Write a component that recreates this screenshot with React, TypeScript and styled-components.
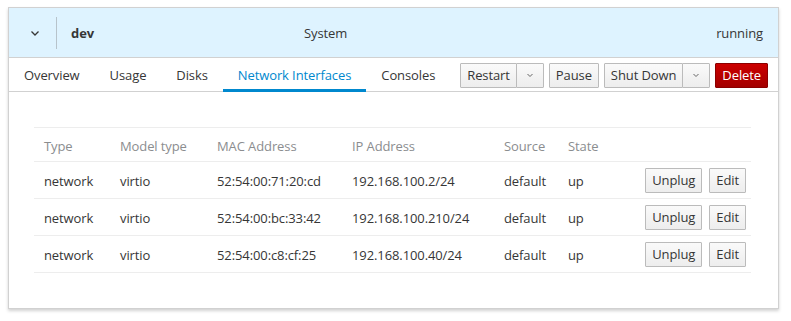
import styled, { createGlobalStyle } from 'styled-components'

const GlobalStyle = createGlobalStyle`
  body {
    margin: 0;
    padding: 7px 12px 13px 8px;
    font-family: 'Open Sans', 'Liberation Sans', sans-serif;
    font-size: 13px;
    letter-spacing: -0.1px;
    color: #363636;
    background: #fff;
    white-space: nowrap;
  }
`

const Card = styled.div`
  width: 769px;
  border: 1px solid #d1d1d1;
  background: #fff;
  box-shadow: 0 2px 3px rgba(3, 3, 3, 0.18);
`

const Header = styled.div`
  display: grid;
  grid-template-columns: 47px 1px 247px 1fr auto;
  align-items: center;
  height: 49px;
  padding-right: 15px;
  background: #def3ff;
  border-bottom: 1px solid #d1d1d1;
`

const Toggle = styled.span`
  display: flex;
  justify-content: center;
  padding-left: 4px;
`

const Separator = styled.span`
  width: 1px;
  height: 32px;
  background: #b7c3cb;
`

const VmName = styled.span`
  padding-left: 14px;
  font-weight: 700;
`

const TabsBar = styled.div`
  display: flex;
  justify-content: space-between;
  align-items: center;
  height: 33px;
  padding-right: 10px;
  border-bottom: 1px solid #d1d1d1;
`

const Tabs = styled.div`
  display: flex;
  align-self: stretch;
`

const Tab = styled.div<{ $active?: boolean }>`
  display: flex;
  align-items: center;
  padding: 3px 15px 0;
  color: ${(p) => (p.$active ? '#0088ce' : '#363636')};
  border-bottom: 3px solid ${(p) => (p.$active ? '#0088ce' : 'transparent')};
  margin-bottom: -1px;
`

const Actions = styled.div`
  display: flex;
  gap: 5px;
  padding-top: 1px;
`

const Group = styled.div`
  display: flex;
`

const Button = styled.button<{ $danger?: boolean; $caret?: boolean }>`
  height: 25px;
  padding: ${(p) => (p.$caret ? '0 9px' : '0 6px')};
  font: inherit;
  letter-spacing: inherit;
  color: ${(p) => (p.$danger ? '#fff' : '#363636')};
  background: ${(p) =>
    p.$danger
      ? 'linear-gradient(#cc0000, #a30000)'
      : 'linear-gradient(#fafafa, #ededed)'};
  border: 1px solid ${(p) => (p.$danger ? '#8b0000' : '#bbb')};
  border-radius: 1px;
  display: flex;
  align-items: center;
  & + & {
    margin-left: -1px;
  }
`

const Body = styled.div`
  padding: 35px 27px 35px 25px;
`

const Table = styled.table`
  width: 100%;
  border-collapse: collapse;
`

const HeadCell = styled.th`
  height: 31px;
  padding: 2px 10px 0;
  font-weight: 400;
  text-align: left;
  color: #8b8d8f;
  border-top: 1px solid #ededed;
  border-bottom: 1px solid #ededed;
`

const Cell = styled.td`
  height: 35px;
  padding: 1px 10px 0;
  border-bottom: 1px solid #ededed;
`

const ButtonCell = styled.td`
  padding: 0 5px 0 0;
  border-bottom: 1px solid #ededed;
`

const RowButtons = styled.div`
  display: flex;
  justify-content: flex-end;
  gap: 8px;
`

const Chevron = ({ size = 10 }: { size?: number }) => (
  <svg width={size} height={size} viewBox="0 0 10 10">
    <path d="M1.5 3.5 L5 7 L8.5 3.5" fill="none" stroke="#363636" strokeWidth="1.3" />
  </svg>
)

const SmallCaret = () => (
  <svg width="8" height="8" viewBox="0 0 8 8">
    <path d="M1.5 3 L4 5.5 L6.5 3" fill="none" stroke="#666" strokeWidth="1" />
  </svg>
)

const interfaces = [
  { mac: '52:54:00:71:20:cd', ip: '192.168.100.2/24' },
  { mac: '52:54:00:bc:33:42', ip: '192.168.100.210/24' },
  { mac: '52:54:00:c8:cf:25', ip: '192.168.100.40/24' },
]

export default function App() {
  return (
    <>
      <GlobalStyle />
      <Card>
        <Header>
          <Toggle>
            <Chevron />
          </Toggle>
          <Separator />
          <VmName>dev</VmName>
          <span>System</span>
          <span>running</span>
        </Header>
        <TabsBar>
          <Tabs>
            <Tab>Overview</Tab>
            <Tab>Usage</Tab>
            <Tab>Disks</Tab>
            <Tab $active>Network Interfaces</Tab>
            <Tab>Consoles</Tab>
          </Tabs>
          <Actions>
            <Group>
              <Button>Restart</Button>
              <Button $caret>
                <SmallCaret />
              </Button>
            </Group>
            <Button>Pause</Button>
            <Group>
              <Button>Shut Down</Button>
              <Button $caret>
                <SmallCaret />
              </Button>
            </Group>
            <Button $danger>Delete</Button>
          </Actions>
        </TabsBar>
        <Body>
          <Table>
            <thead>
              <tr>
                <HeadCell style={{ width: 56 }}>Type</HeadCell>
                <HeadCell style={{ width: 77 }}>Model type</HeadCell>
                <HeadCell style={{ width: 115 }}>MAC Address</HeadCell>
                <HeadCell style={{ width: 132 }}>IP Address</HeadCell>
                <HeadCell style={{ width: 44 }}>Source</HeadCell>
                <HeadCell>State</HeadCell>
                <HeadCell />
              </tr>
            </thead>
            <tbody>
              {interfaces.map((n) => (
                <tr key={n.mac}>
                  <Cell>network</Cell>
                  <Cell>virtio</Cell>
                  <Cell>{n.mac}</Cell>
                  <Cell>{n.ip}</Cell>
                  <Cell>default</Cell>
                  <Cell>up</Cell>
                  <ButtonCell>
                    <RowButtons>
                      <Button>Unplug</Button>
                      <Button>Edit</Button>
                    </RowButtons>
                  </ButtonCell>
                </tr>
              ))}
            </tbody>
          </Table>
        </Body>
      </Card>
    </>
  )
}
